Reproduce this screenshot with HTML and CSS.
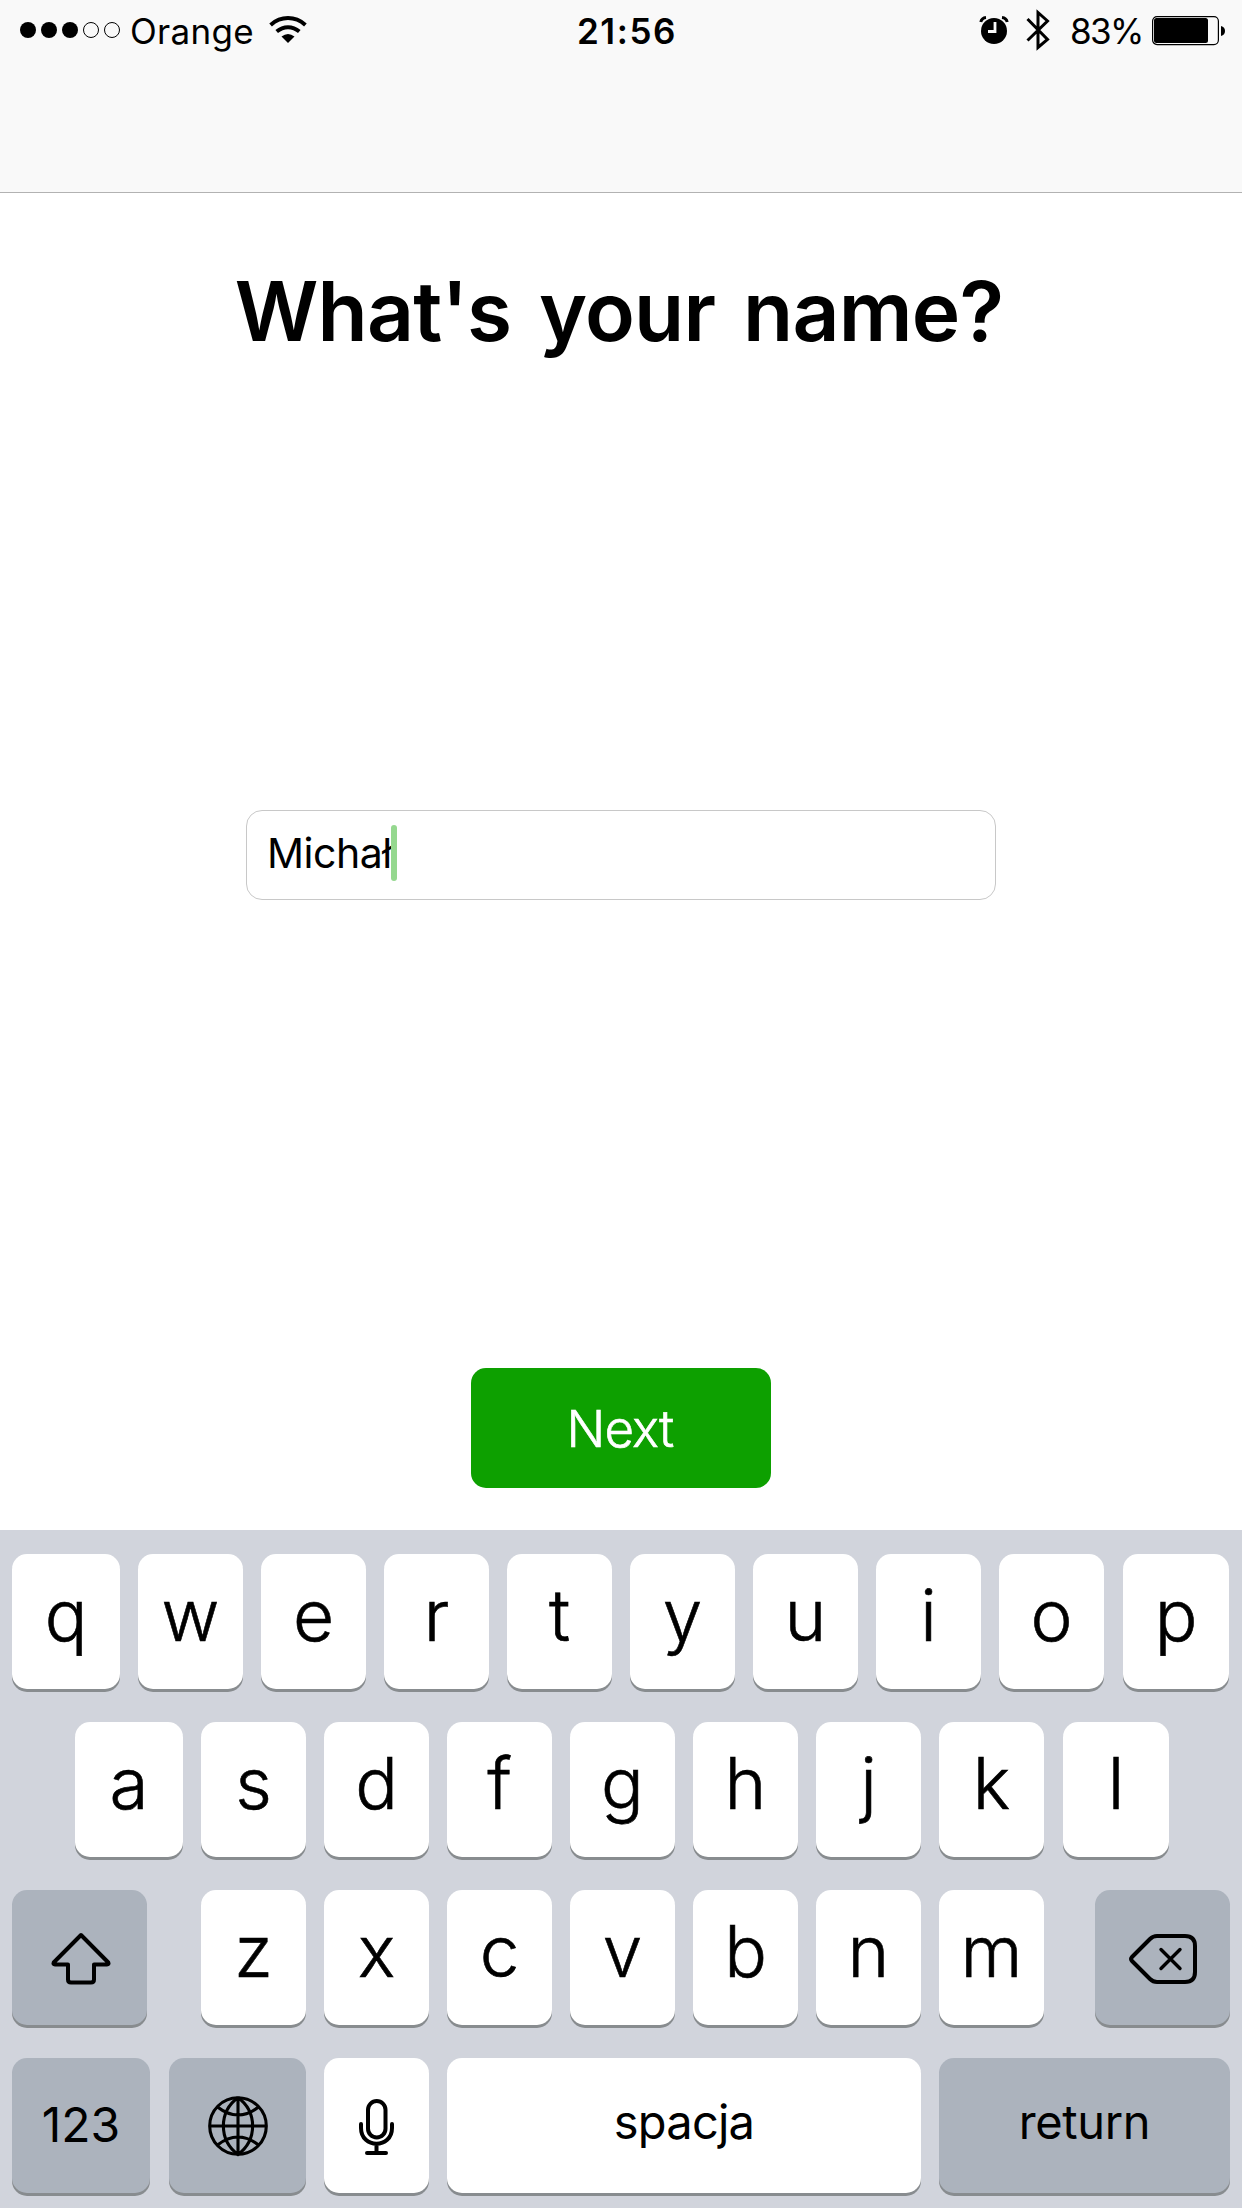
FILE: index.html
```html
<!DOCTYPE html>
<html lang="en">
<head>
<meta charset="utf-8">
<title>What's your name?</title>
<link rel="stylesheet" href="styles.css">
</head>
<body>
<header class="navbar">
  <div class="status status-left">
    <svg class="signal" viewBox="0 0 100 16"><g fill="#000"><circle cx="8" cy="8" r="8"/><circle cx="29" cy="8" r="8"/><circle cx="50" cy="8" r="8"/></g><g fill="none" stroke="#000"><circle cx="71" cy="8" r="7.5"/><circle cx="92" cy="8" r="7.5"/></g></svg>
    <span class="carrier">Orange</span>
    <svg class="wifi" viewBox="0 0 38 28"><g fill="none" stroke="#000" stroke-width="4"><path d="M1.6 8.9C12 -.2 26 -.2 36.400 8.900"/><path d="M7.700 15.500C14.500 9.800 23.500 9.800 30.300 15.500"/></g><path d="M12.500 20.500Q19 15.500 25.500 20.500L19 27Z"/></svg>
  </div>
  <div class="clock">21:56</div>
  <div class="status status-right">
    <svg class="alarm" viewBox="0 0 28 28"><circle cx="14" cy="15" r="13"/><path d="M.8 6A6 6 0 0 1 6 1.500M27.200 6A6 6 0 0 0 22 1.500" fill="none" stroke="#000" stroke-width="3"/><path d="M15 6V15.500H8" fill="none" stroke="#f9f9f9" stroke-width="2.800"/></svg>
    <svg class="bluetooth" viewBox="0 0 24 42"><path d="M1.500 10L21.500 30.500L12 38.500V3.500L21.500 12L1.500 31.500" fill="none" stroke="#000" stroke-width="3"/></svg>
    <span class="percent">83%</span>
    <svg class="battery" viewBox="0 0 73 30"><rect x=".6" y=".6" width="65.800" height="28" rx="4.500" fill="none" stroke="#000" stroke-width="1.200"/><rect x="2" y="2" width="54" height="25" rx="2.500"/><path d="M69 10Q73 11 73 15T69 20Z"/></svg>
  </div>
</header>
<main class="content">
  <h1 class="title">What's your name?</h1>
  <div class="field"><span class="value">Michał</span><span class="caret"></span></div>
  <button class="next"><span>Next</span></button>
</main>
<section class="keyboard">
  <div class="row"><div class="key first">q</div><div class="key">w</div><div class="key">e</div><div class="key">r</div><div class="key">t</div><div class="key">y</div><div class="key">u</div><div class="key">i</div><div class="key">o</div><div class="key last">p</div></div>
  <div class="row home"><div class="key first">a</div><div class="key">s</div><div class="key">d</div><div class="key">f</div><div class="key">g</div><div class="key">h</div><div class="key">j</div><div class="key">k</div><div class="key last">l</div></div>
  <div class="row">
    <div class="key dark shift"><svg class="icon-shift" viewBox="0 0 60 54"><path d="M30 3L57.300 30.500Q58.200 32.500 56 32.500H43V47.500Q43 50.500 40 50.500H20Q17 50.500 17 47.500V32.500H4Q1.800 32.500 2.700 30.500Z" fill="none" stroke="#000" stroke-width="4" stroke-linejoin="round"/></svg></div>
    <div class="key">z</div><div class="key">x</div><div class="key">c</div><div class="key">v</div><div class="key">b</div><div class="key">n</div><div class="key">m</div>
    <div class="key dark delete"><svg class="icon-delete" viewBox="0 0 68 50"><g fill="none" stroke="#000" stroke-width="4" stroke-linecap="round" stroke-linejoin="round"><path d="M3 23L21 5Q24 2 28 2H56Q66 2 66 12V38Q66 48 56 48H28Q24 48 21 45L3 27Q1 25 3 23Z"/><path d="M32 15.500L51 34.500M51 15.500L32 34.500" stroke-width="3.400"/></g></svg></div>
  </div>
  <div class="row">
    <div class="key dark word numbers">123</div>
    <div class="key dark globe"><svg class="icon-globe" viewBox="0 0 60 60"><g fill="none" stroke="#000" stroke-width="3.100"><circle cx="30" cy="30" r="28.300"/><path d="M30 1V59M1 30H59M30 1.500C10.500 16 10.500 44 30 58.500C49.500 44 49.500 16 30 1.500M9.500 11Q30 27 50.500 11M9.500 49Q30 33 50.500 49"/></g></svg></div>
    <div class="key mic"><svg class="icon-mic" viewBox="0 0 35 56"><g fill="none" stroke="#000" stroke-width="4" stroke-linecap="round"><rect x="9" y="2" width="17.500" height="36.500" rx="8.750"/><path d="M2 25V29C2 50 33 50 33 29V25M17.500 45V54M8 54H27"/></g></svg></div>
    <div class="key word space">spacja</div>
    <div class="key dark word return">return</div>
  </div>
</section>
</body>
</html>
```
FILE: styles.css
```css
* { box-sizing: border-box; }
body { margin: 0; width: 1242px; height: 2208px; display: flex; flex-direction: column; overflow: hidden; background: #fff; color: #000; font-family: Inter, "Liberation Sans", sans-serif; }
svg { display: block; flex: none; overflow: visible; }
.navbar { height: 193px; flex: none; display: grid; grid-template-columns: 1fr auto 1fr; align-items: start; background: #f9f9f9; border-bottom: 1px solid #b2b2b2; font-size: 35px; line-height: 60px; white-space: nowrap; }
.status { display: flex; height: 60px; }
.status-left { padding-left: 20px; }
.signal { width: 100px; height: 16px; margin-top: 22px; }
.carrier { width: 123px; margin-left: 10px; margin-top: 1px; letter-spacing: 0.3px; }
.wifi { width: 38px; height: 28px; margin: 16px 0 0 16px; }
.clock { font-weight: 600; letter-spacing: 1.6px; padding-left: 12px; margin-top: 1px; }
.status-right { justify-content: flex-end; padding-right: 17px; }
.alarm { width: 28px; height: 28px; margin-top: 16px; }
.bluetooth { width: 24px; height: 42px; margin: 9px 0 0 18px; }
.percent { width: 73px; margin: 1px 9px 0 20px; letter-spacing: -1.6px; }
.battery { width: 73px; height: 30px; margin-top: 16px; }
.content { height: 1337px; flex: none; display: flex; flex-direction: column; align-items: center; }
.title { margin: 69px 0 0; padding-right: 4px; height: 100px; font-size: 82px; line-height: 100px; font-weight: 600; letter-spacing: -0.8px; word-spacing: 8px; white-space: nowrap; }
.field { width: 750px; height: 90px; margin-top: 448px; padding-left: 20px; display: flex; align-items: center; border: 1px solid #c8c8c8; border-radius: 16px; font-size: 41px; }
.value { letter-spacing: -0.5px; padding-bottom: 4px; }
.caret { width: 6px; height: 56px; margin: -4px 0 0 -1px; border-radius: 3px; background: #95d88f; }
.next { width: 300px; height: 120px; margin: 468px 0 0; padding: 0 2px 0 0; border: 0; border-radius: 15px; background: #0da000; color: #fff; font-family: inherit; font-size: 51px; font-weight: 300; letter-spacing: -0.8px; -webkit-text-stroke: 0.6px; }
.keyboard { height: 678px; flex: none; display: flex; flex-direction: column; gap: 33px; padding: 24px 12px 0; background: #d1d4dc; }
.row { height: 135px; display: flex; gap: 18px; }
.home { padding-left: 63px; }
.key { width: 105px; height: 135px; flex: none; display: flex; align-items: center; justify-content: center; padding-bottom: 13px; border-radius: 15px; background: #fff; box-shadow: 0 3px 0 #888c8f; font-size: 71px; font-weight: 300; line-height: 86px; -webkit-text-stroke: 0.6px; }
.first { width: 108px; }
.last { width: 106px; margin-left: 1px; }
.dark { background: #acb3bd; }
.word { padding-bottom: 8px; font-size: 47px; font-weight: 400; letter-spacing: -0.8px; -webkit-text-stroke: 0; }
.shift { width: 135px; margin-right: 36px; padding-bottom: 5px; }
.delete { width: 135px; margin-left: 33px; padding-bottom: 5px; }
.numbers { width: 138px; padding: 0 0 2px; font-size: 48px; letter-spacing: 0; }
.globe { width: 137px; margin-left: 1px; padding: 0; }
.mic { padding: 0; }
.space { width: 474px; }
.return { width: 291px; letter-spacing: -0.4px; }
.icon-shift { width: 60px; height: 54px; margin: 8px 0 0 3px; }
.icon-delete { width: 68px; height: 50px; margin-top: 8px; }
.icon-globe { width: 60px; height: 60px; }
.icon-mic { width: 35px; height: 56px; margin-top: 2px; }
```
